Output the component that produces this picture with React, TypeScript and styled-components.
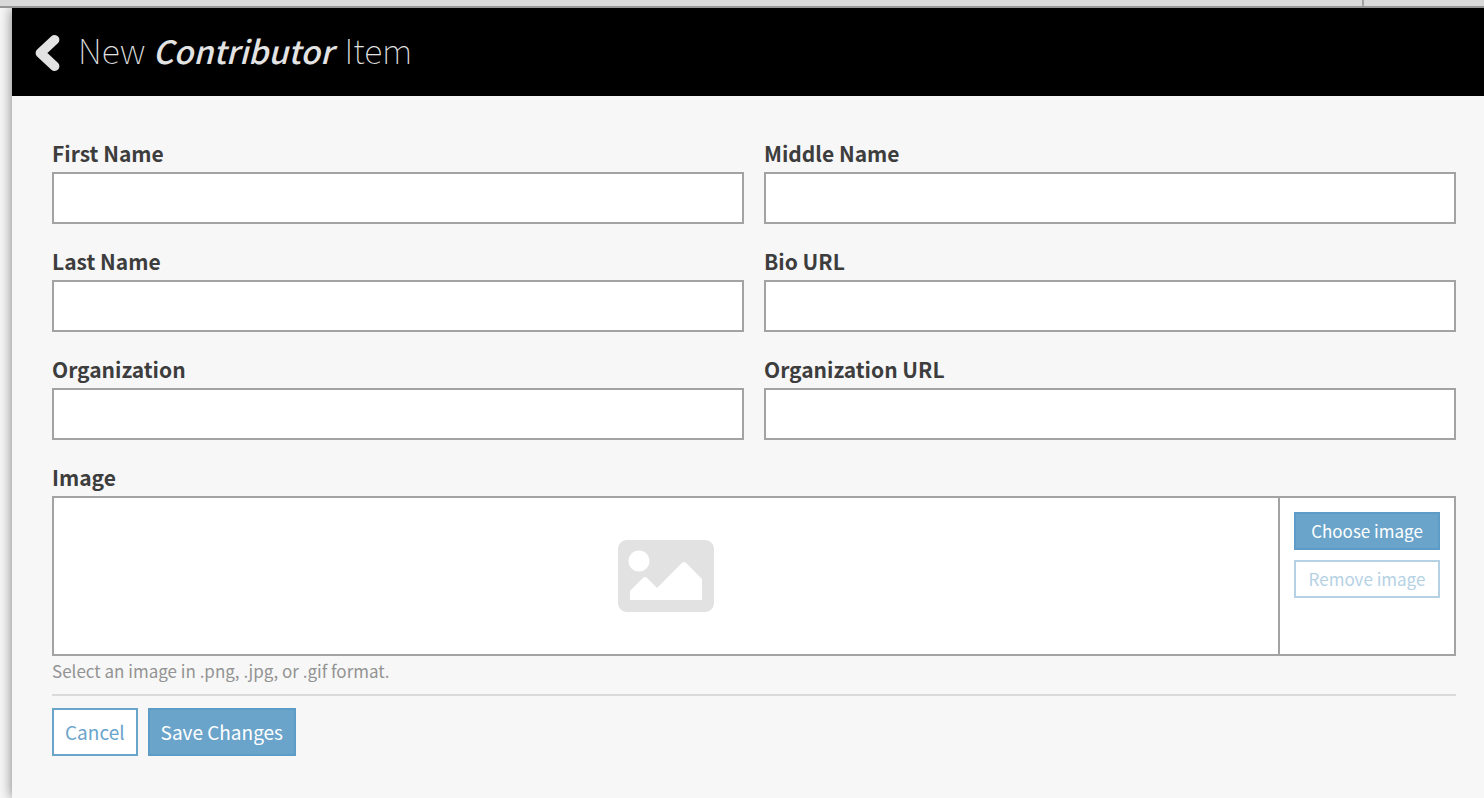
import React, { useId } from "react";
import styled, { createGlobalStyle } from "styled-components";

const GlobalStyle = createGlobalStyle`
  *, *::before, *::after { box-sizing: border-box; }
  body {
    margin: 0;
    background: #f7f7f7;
    color: #3d3d3d;
    font-family: "Noto Sans CJK SC", "Open Sans", sans-serif;
  }
`;

const Page = styled.div`
  display: flex;
  flex-direction: column;
  min-height: 100vh;
`;

const TopBar = styled.div`
  display: flex;
  justify-content: flex-end;
  height: 8px;
  background: #d9d9d9;
  border-bottom: 2px solid #969696;
`;

const TopBarSection = styled.div`
  width: 122px;
  border-left: 2px solid #a0a0a0;
`;

const Stage = styled.div`
  flex: 1;
  display: flex;
  padding-left: 12px;
  overflow: hidden;
`;

const Panel = styled.main`
  flex: 1;
  min-width: 0;
  background: #f7f7f7;
  box-shadow: 0 0 12px rgba(0, 0, 0, 0.5);
`;

const Header = styled.header`
  display: flex;
  align-items: center;
  gap: 16px;
  height: 88px;
  padding: 0 22px;
  background: #000;
  color: #e3e3e3;
`;

const BackButton = styled.button`
  display: flex;
  padding: 2px 0 0;
  border: 0;
  background: none;
  color: inherit;
  cursor: pointer;
`;

const Title = styled.h1`
  margin: 0;
  padding-bottom: 4px;
  font-size: 34px;
  font-weight: 100;
  line-height: 48px;

  em {
    margin-right: 4px;
    font-size: 32px;
    font-weight: 500;
  }
`;

const Form = styled.form`
  padding: 40px 28px 40px 40px;
`;

const FieldGrid = styled.div`
  display: grid;
  grid-template-columns: 1fr 1fr;
  gap: 20px;
`;

const FieldBox = styled.div<{ $wide?: boolean }>`
  display: flex;
  flex-direction: column;
  min-width: 0;
  grid-column: ${(p) => (p.$wide ? "1 / -1" : "auto")};
`;

const Label = styled.label`
  height: 36px;
  font-size: 21px;
  font-weight: 700;
  line-height: 34px;
`;

const TextInput = styled.input`
  width: 100%;
  height: 52px;
  padding: 0 12px;
  border: 2px solid #a3a3a3;
  border-radius: 0;
  background: #fff;
  color: inherit;
  font: inherit;
  font-size: 21px;
`;

const ImagePicker = styled.div`
  display: flex;
  height: 160px;
  border: 2px solid #a3a3a3;
  background: #fff;
`;

const Preview = styled.div`
  flex: 1;
  display: flex;
  align-items: center;
  justify-content: center;
  color: #e2e2e2;
`;

const PickerActions = styled.div`
  display: flex;
  flex-direction: column;
  gap: 10px;
  width: 176px;
  padding: 14px;
  border-left: 2px solid #a3a3a3;
`;

const Button = styled.button<{ $primary?: boolean; $small?: boolean }>`
  height: ${(p) => (p.$small ? 38 : 48)}px;
  padding: 0 ${(p) => (p.$small ? 0 : 11)}px;
  border: 2px solid ${(p) => (p.$primary ? "#5d9cc6" : "#6ba4ca")};
  background: ${(p) => (p.$primary ? "#6ba4ca" : "#fff")};
  color: ${(p) => (p.$primary ? "#fff" : "#6ba4ca")};
  font-family: inherit;
  font-size: ${(p) => (p.$small ? 17 : 19)}px;
  font-weight: 400;
  line-height: 28px;
  cursor: pointer;

  &:disabled {
    border-color: #b5d2e5;
    color: #b5d2e5;
    cursor: default;
  }
`;

const Help = styled.p`
  margin: 0;
  padding-bottom: 8px;
  color: #939393;
  font-size: 17px;
  line-height: 30px;
`;

const Actions = styled.div`
  display: flex;
  gap: 10px;
  padding-top: 12px;
  border-top: 2px solid #dadada;
`;

function Field({ label }: { label: string }) {
  const id = useId();
  return (
    <FieldBox>
      <Label htmlFor={id}>{label}</Label>
      <TextInput id={id} type="text" />
    </FieldBox>
  );
}

const fields = [
  "First Name",
  "Middle Name",
  "Last Name",
  "Bio URL",
  "Organization",
  "Organization URL",
];

export default function App() {
  return (
    <>
      <GlobalStyle />
      <Page>
        <TopBar>
          <TopBarSection />
        </TopBar>
        <Stage>
          <Panel>
            <Header>
              <BackButton type="button" aria-label="Back">
                <svg width="28" height="36" viewBox="0 0 28 36" aria-hidden="true">
                  <path
                    d="M20.6 4.8 L6.4 18 L20.6 31.2"
                    fill="none"
                    stroke="currentColor"
                    strokeWidth="9.6"
                    strokeLinecap="round"
                    strokeLinejoin="round"
                  />
                </svg>
              </BackButton>
              <Title>
                New <em>Contributor</em> Item
              </Title>
            </Header>
            <Form onSubmit={(e) => e.preventDefault()}>
              <FieldGrid>
                {fields.map((name) => (
                  <Field key={name} label={name} />
                ))}
                <FieldBox $wide>
                  <Label htmlFor="choose-image">Image</Label>
                  <ImagePicker>
                    <Preview>
                      <svg width="96" height="72" viewBox="0 64 512 384" aria-hidden="true">
                        <path
                          fill="currentColor"
                          d="M464 448H48c-26.51 0-48-21.49-48-48V112c0-26.51 21.49-48 48-48h416c26.51 0 48 21.49 48 48v288c0 26.51-21.49 48-48 48zM112 120c-30.928 0-56 25.072-56 56s25.072 56 56 56 56-25.072 56-56-25.072-56-56-56zM64 384h384V272l-87.515-87.515c-4.686-4.686-12.284-4.686-16.971 0L208 320l-55.515-55.515c-4.686-4.686-12.284-4.686-16.971 0L64 336v48z"
                        />
                      </svg>
                    </Preview>
                    <PickerActions>
                      <Button id="choose-image" type="button" $primary $small>
                        Choose image
                      </Button>
                      <Button type="button" $small disabled>
                        Remove image
                      </Button>
                    </PickerActions>
                  </ImagePicker>
                  <Help>Select an image in .png, .jpg, or .gif format.</Help>
                </FieldBox>
              </FieldGrid>
              <Actions>
                <Button type="button">Cancel</Button>
                <Button type="submit" $primary>
                  Save Changes
                </Button>
              </Actions>
            </Form>
          </Panel>
        </Stage>
      </Page>
    </>
  );
}
